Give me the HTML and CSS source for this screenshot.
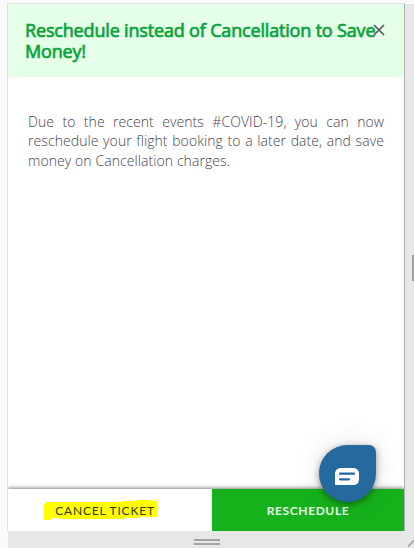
FILE: index.html
```
<!DOCTYPE html>
<html lang="en">
  <head>
    <meta charset="utf-8">
    <title>Reschedule</title>
    <link rel="stylesheet" href="styles.css">
  </head>
  <body>
    <div class="viewport">
      <div class="modal">
        <div class="modal-header">
          <h1>Reschedule instead of Cancellation to Save Money!</h1>
          <svg class="close" width="12" height="12" viewBox="0 0 12 12">
            <path d="M1 1L11 11M11 1L1 11" />
          </svg>
        </div>
        <div class="modal-body">
          <p>Due to the recent events #COVID-19, you can now reschedule your flight booking to a later date, and save money on Cancellation charges.</p>
        </div>
        <div class="modal-footer">
          <div class="btn cancel">
            <svg class="marker" width="114" height="21" viewBox="0 0 114 21">
              <path d="M1 2H78V1H91V0H108V1H113V17H95V18H80V19H16V18H7V20H0V4H1Z" />
            </svg>
            <span>CANCEL TICKET</span>
          </div>
          <div class="btn reschedule"><span>RESCHEDULE</span></div>
        </div>
        <div class="chat">
          <svg width="24" height="18" viewBox="0 0 24 18">
            <path class="bubble" d="M5 0H19Q24 1 24 6V11Q24 17 18 17H0V6Q0 1 5 0Z" />
            <path class="lines" d="M5 5.7H19M5 11.3H14" />
          </svg>
        </div>
      </div>
      <div class="rail-right"><div class="grip"></div></div>
      <div class="rail-bottom">
        <div class="grip"></div>
        <svg class="corner" width="6" height="9" viewBox="0 0 6 9">
          <path d="M0 7.5L7 .5" />
        </svg>
      </div>
    </div>
  </body>
</html>
```
FILE: styles.css
```
* {
  box-sizing: border-box;
}

body {
  margin: 0;
  height: 548px;
  padding: 3px 0 0 7px;
  overflow: hidden;
  background: #fafafa;
  font-family: "Open Sans", sans-serif;
}

.viewport {
  display: grid;
  grid-template-columns: 398px 9px;
  grid-template-rows: 528px 17px;
}

.modal {
  position: relative;
  display: flex;
  flex-direction: column;
  overflow: hidden;
  border: 1px solid #e0e0e0;
  border-right-color: #b0b0b0;
  border-bottom: 0;
  background: #fff;
}

.modal-header {
  position: relative;
  height: 73px;
  padding: 16px 0 0 17px;
  background: #e5ffe8;
}

h1 {
  margin: 0;
  width: 360px;
  font-size: 18px;
  line-height: 21px;
  font-weight: 400;
  letter-spacing: -0.17px;
  color: #0aa33c;
  -webkit-text-stroke: 0.7px #0aa33c;
}

.close {
  position: absolute;
  left: 365px;
  top: 20px;
  fill: none;
  stroke: #56565f;
  stroke-width: 1.7;
}

.modal-body {
  flex: 1;
  padding: 35px 20px 0;
}

p {
  margin: 0;
  font-size: 14px;
  line-height: 19.4px;
  font-weight: 300;
  letter-spacing: 0.08px;
  text-align: justify;
  color: #474352;
}

.modal-footer {
  display: flex;
  height: 42px;
  background: #fff;
  box-shadow: 0 -1px 4px rgba(0, 0, 0, 0.5);
}

.btn {
  position: relative;
  display: flex;
  align-items: center;
  justify-content: center;
  font-family: Lato, sans-serif;
  font-size: 12px;
  letter-spacing: 0.8px;
}

.btn span {
  position: relative;
}

.cancel {
  width: 204px;
  padding-right: 10px;
  color: #353500;
}

.marker {
  position: absolute;
  left: 36px;
  top: 11px;
  fill: #ff0;
}

.reschedule {
  flex: 1;
  background: #16b21c;
  color: #e8fbe8;
  font-weight: 700;
  letter-spacing: 0.6px;
}

.chat {
  position: absolute;
  left: 311px;
  top: 441px;
  width: 57px;
  height: 57px;
  padding: 23px 0 0 16px;
  border-radius: 50% 7px 50% 50%;
  background: #256a9f;
  box-shadow: 0 2px 6px rgba(0, 0, 0, 0.4), 0 0 28px rgba(0, 0, 0, 0.12);
}

.chat svg {
  display: block;
}

.bubble {
  fill: #fff;
}

.lines {
  fill: none;
  stroke: #256a9f;
  stroke-width: 2.2;
  stroke-linecap: round;
}

.rail-right,
.rail-bottom {
  background: #e7e7e7;
}

.rail-right {
  margin-top: 1px;
  padding: 251px 0 0 7px;
}

.rail-right .grip {
  height: 26px;
  background: #a0a0a0;
}

.rail-bottom {
  grid-column: 1 / 3;
  display: flex;
  justify-content: space-between;
  margin-left: 1px;
  padding: 8px 0 0 186px;
}

.rail-bottom .grip {
  width: 26px;
  height: 6px;
  border: solid #a3a3a3;
  border-width: 2px 0;
}

.corner {
  fill: none;
  stroke: #999;
  stroke-width: 1.3;
}
```
